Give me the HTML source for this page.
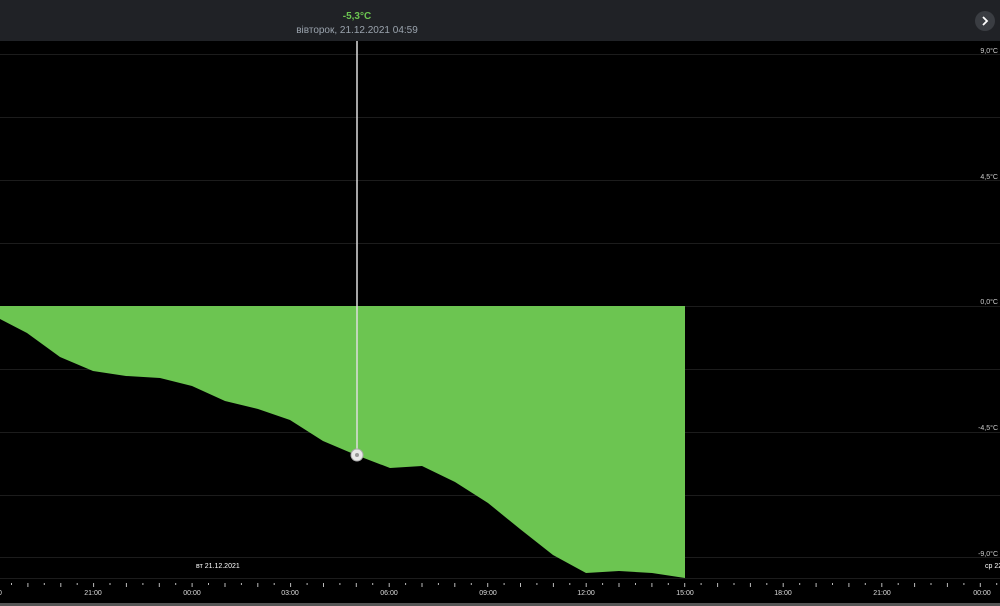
<!DOCTYPE html>
<html><head><meta charset="utf-8"><style>
html,body{margin:0;padding:0;background:#000;width:1000px;height:606px;overflow:hidden;font-family:"Liberation Sans",sans-serif}
.hdr{position:absolute;left:0;top:0;width:1000px;height:41px;background:#202226}
</style></head><body>
<div class="hdr"></div>
<svg width="1000" height="606" style="position:absolute;left:0;top:0" font-family="Liberation Sans, sans-serif">
<g stroke="#1c1c1c" stroke-width="1">
<line x1="0" y1="54.5" x2="1000" y2="54.5"/><line x1="0" y1="117.5" x2="1000" y2="117.5"/>
<line x1="0" y1="180.5" x2="1000" y2="180.5"/><line x1="0" y1="243.5" x2="1000" y2="243.5"/>
<line x1="0" y1="306.5" x2="1000" y2="306.5"/><line x1="0" y1="369.5" x2="1000" y2="369.5"/>
<line x1="0" y1="432.5" x2="1000" y2="432.5"/><line x1="0" y1="495.5" x2="1000" y2="495.5"/>
<line x1="0" y1="557.5" x2="1000" y2="557.5"/><line x1="0" y1="578.5" x2="1000" y2="578.5"/>
</g>
<path fill="#6cc551" d="M0,306 L685,306 L685,578 L652,573 L619,571 L586,573 L553,555 L520,529 L488,503 L455,482 L422,466 L390,468 L356,455 L323,441 L290,420 L258,409 L225,401 L192,386 L160,378 L126,376 L93,371 L60,357 L27,333 L0,319 Z"/>
<line x1="357" y1="41" x2="357" y2="453" stroke="#ddd" stroke-width="1.5"/>
<circle cx="357" cy="455" r="6" fill="#e8e8e8" stroke="#aaa" stroke-width="1"/>
<circle cx="357" cy="455" r="2" fill="#999"/>
<g fill="#ccc" font-size="7" text-anchor="end">
<text x="998" y="53">9,0°C</text><text x="998" y="179">4,5°C</text><text x="998" y="304">0,0°C</text>
<text x="998" y="430">-4,5°C</text><text x="998" y="556">-9,0°C</text>
</g>
<g fill="#fff" font-size="7">
<text x="196" y="568">вт 21.12.2021</text><text x="985" y="568">ср 22</text>
</g>
<g id="ticks" stroke="#bbb" stroke-width="1"></g>
<g fill="#ddd" font-size="7" text-anchor="middle">
<text x="0" y="595">0</text><text x="93" y="595">21:00</text><text x="192" y="595">00:00</text><text x="290" y="595">03:00</text>
<text x="389" y="595">06:00</text><text x="488" y="595">09:00</text><text x="586" y="595">12:00</text><text x="685" y="595">15:00</text>
<text x="783" y="595">18:00</text><text x="882" y="595">21:00</text><text x="982" y="595">00:00</text>
</g>
<rect x="0" y="603" width="1000" height="3" fill="#555"/>
<text x="357" y="19" fill="#6cc551" font-size="10" font-weight="bold" text-anchor="middle">-5,3°C</text>
<text x="357" y="33" fill="#9aa3ad" font-size="10" text-anchor="middle">вівторок, 21.12.2021 04:59</text>
<circle cx="985" cy="21" r="10" fill="#3a3d42"/>
<path d="M983,17 L987,21 L983,25" stroke="#fff" stroke-width="1.8" fill="none"/>
</svg>
<script>
var g=document.getElementById('ticks'),s='';
for(var i=0;i<62;i++){var x=11.5+i*16.42;var big=i%2==1;s+='<line x1="'+x.toFixed(1)+'" y1="'+(big?583:583)+'" x2="'+x.toFixed(1)+'" y2="'+(big?587:585)+'"/>';}
g.innerHTML=s;
</script>
</body></html>
